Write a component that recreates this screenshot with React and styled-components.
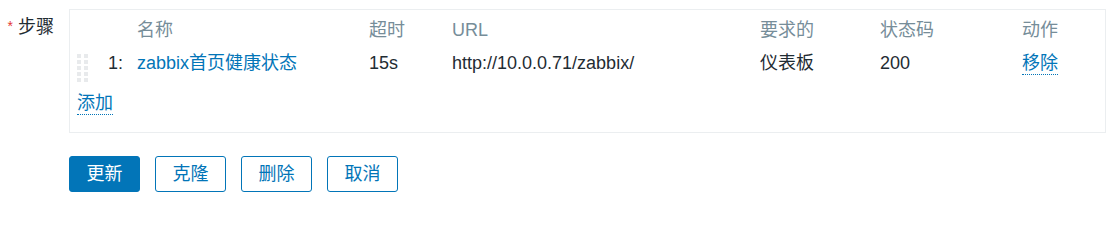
import React from "react";
import styled, { createGlobalStyle } from "styled-components";

const GlobalStyle = createGlobalStyle`
  body {
    margin: 0;
    background: #ffffff;
    font-family: "Liberation Sans", Arial, "Noto Sans CJK SC", sans-serif;
    font-size: 18px;
    line-height: 27px;
    color: #1f2c33;
  }
`;

const columns = ["", "", "名称", "超时", "URL", "要求的", "状态码", "动作"];

const steps = [
  {
    no: 1,
    name: "zabbix首页健康状态",
    timeout: "15s",
    url: "http://10.0.0.71/zabbix/",
    required: "仪表板",
    status: "200",
  },
];

export default function App() {
  return (
    <>
      <GlobalStyle />
      <Page>
        <FormRow>
          <Label>
            <Asterisk>*</Asterisk>步骤
          </Label>
          <Panel>
            <StepsGrid>
              {columns.map((c, i) => (
                <HeaderCell key={i}>{c}</HeaderCell>
              ))}
              {steps.map((s) => (
                <React.Fragment key={s.no}>
                  <Cell>
                    <DragHandle>
                      {Array.from({ length: 10 }).map((_, i) => (
                        <Dot key={i} />
                      ))}
                    </DragHandle>
                  </Cell>
                  <Cell>{s.no}:</Cell>
                  <Cell>
                    <NameLink href="#">{s.name}</NameLink>
                  </Cell>
                  <Cell>{s.timeout}</Cell>
                  <Cell>{s.url}</Cell>
                  <Cell>{s.required}</Cell>
                  <Cell>{s.status}</Cell>
                  <Cell>
                    <DottedLink href="#">移除</DottedLink>
                  </Cell>
                </React.Fragment>
              ))}
            </StepsGrid>
            <AddRow>
              <DottedLink href="#">添加</DottedLink>
            </AddRow>
          </Panel>
        </FormRow>
        <Buttons>
          <Button primary>更新</Button>
          <Button>克隆</Button>
          <Button>删除</Button>
          <Button>取消</Button>
        </Buttons>
      </Page>
    </>
  );
}

const Page = styled.div`
  padding-top: 9px;
`;

const FormRow = styled.div`
  display: flex;
  align-items: flex-start;
  gap: 15px;
`;

const Label = styled.div`
  width: 54px;
  flex-shrink: 0;
  text-align: right;
  padding-top: 4px;
  white-space: nowrap;
`;

const Asterisk = styled.span`
  color: #e33734;
  font-size: 14px;
  margin-right: 5px;
  vertical-align: 2px;
`;

const Panel = styled.div`
  width: 1037px;
  box-sizing: border-box;
  border: 1px solid #ebeef0;
  background: #ffffff;
  padding: 7px 0 15px 7px;
`;

const StepsGrid = styled.div`
  display: grid;
  grid-template-columns: 31px 29px 232px 83px 308px 120px 142px auto;
  row-gap: 6px;
  align-items: start;
`;

const HeaderCell = styled.div`
  color: #768d99;
  white-space: nowrap;
`;

const Cell = styled.div`
  white-space: nowrap;
`;

const DragHandle = styled.div`
  display: grid;
  grid-template-columns: 4px 4px;
  column-gap: 3px;
  row-gap: 2px;
  margin-top: 4px;
`;

const Dot = styled.span`
  width: 4px;
  height: 4px;
  background: #e8eaec;
`;

const NameLink = styled.a`
  color: #0275b8;
  text-decoration: none;
`;

const DottedLink = styled.a`
  color: #0275b8;
  text-decoration: none;
  border-bottom: 1px dotted #0275b8;
  padding-bottom: 1px;
`;

const AddRow = styled.div`
  margin-top: 8px;
`;

const Buttons = styled.div`
  display: flex;
  gap: 15px;
  margin: 23px 0 0 69px;
`;

const Button = styled.button`
  height: 36px;
  padding: 0 16.5px;
  border: 1px solid #0275b8;
  border-radius: 3px;
  background: ${(p) => (p.primary ? "#0275b8" : "#ffffff")};
  color: ${(p) => (p.primary ? "#ffffff" : "#0275b8")};
  font-family: inherit;
  font-size: 18px;
  line-height: 34px;
  cursor: pointer;
`;
